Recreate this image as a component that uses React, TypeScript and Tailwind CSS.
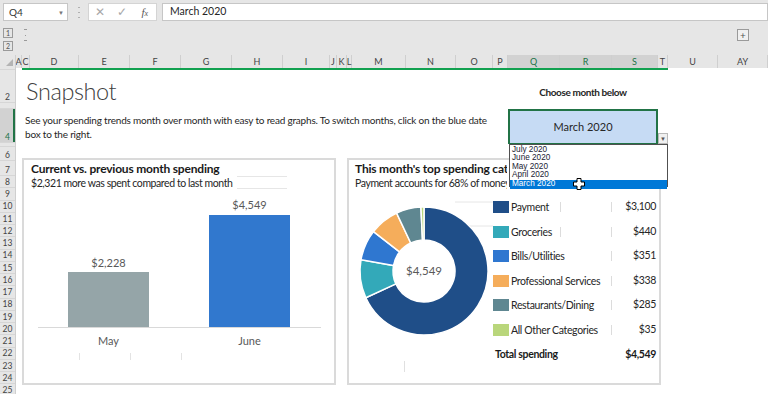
import React from "react";

const COLS: [string, string, boolean][] = [
  ["A", "w-[6px]", false],
  ["C", "w-[8px]", false],
  ["D", "w-[49px]", false],
  ["E", "w-[51px]", false],
  ["F", "w-[51px]", false],
  ["G", "w-[51px]", false],
  ["H", "w-[51px]", false],
  ["I", "w-[47px]", false],
  ["J", "w-[7px]", false],
  ["K", "w-[10px]", false],
  ["L", "w-[5px]", false],
  ["M", "w-[54px]", false],
  ["N", "w-[50px]", false],
  ["O", "w-[37px]", false],
  ["P", "w-[15px]", false],
  ["Q", "w-[52px]", true],
  ["R", "w-[52px]", true],
  ["S", "w-[46px]", true],
  ["T", "w-[10px]", false],
  ["U", "w-[50px]", false],
  ["AY", "w-[50px]", false],
];

const ROWS: [string, string, boolean][] = [
  ["", "h-[2px]", false],
  ["2", "h-[33px]", false],
  ["", "h-[6px]", false],
  ["4", "h-[34px]", true],
  ["", "h-[4px]", false],
  ["6", "h-[14px]", false],
  ["7", "h-[15px]", false],
  ...Array.from({ length: 18 }, (_, i) => [String(i + 8), "h-[12.25px]", false] as [string, string, boolean]),
];

const SEGS = [
  { name: "Payment", v: 3100, c: "#1f4e88", tick: true },
  { name: "Groceries", v: 440, c: "#33a9b9", tick: true },
  { name: "Bills/Utilities", v: 351, c: "#2f77d0", tick: false },
  { name: "Professional Services", v: 338, c: "#f5ad5b", tick: false },
  { name: "Restaurants/Dining", v: 285, c: "#5f8791", tick: false },
  { name: "All Other Categories", v: 35, c: "#b9d67b", tick: false },
];

function arcPath(cx: number, cy: number, r0: number, r1: number, a0: number, a1: number) {
  const p = (r: number, a: number) => [cx + r * Math.sin(a), cy - r * Math.cos(a)];
  const large = a1 - a0 > Math.PI ? 1 : 0;
  const [x0, y0] = p(r1, a0);
  const [x1, y1] = p(r1, a1);
  const [x2, y2] = p(r0, a1);
  const [x3, y3] = p(r0, a0);
  return `M${x0} ${y0} A${r1} ${r1} 0 ${large} 1 ${x1} ${y1} L${x2} ${y2} A${r0} ${r0} 0 ${large} 0 ${x3} ${y3} Z`;
}

function Donut() {
  const total = SEGS.reduce((s, x) => s + x.v, 0);
  let a = 0;
  const cx = 75;
  const cy = 81;
  return (
    <svg width="144" height="192" className="shrink-0">
      <line x1="106" y1="12" x2="144" y2="12" stroke="#e6e6e6" strokeWidth="1" />
      <line x1="106" y1="36" x2="144" y2="36" stroke="#e6e6e6" strokeWidth="1" />
      <line x1="55.5" y1="171" x2="55.5" y2="182" stroke="#e0e0e0" strokeWidth="1" />
      {SEGS.map((s) => {
        const a0 = a;
        const a1 = a + (s.v / total) * Math.PI * 2;
        a = a1;
        return <path key={s.name} d={arcPath(cx, cy, 31, 64, a0, a1)} fill={s.c} stroke="#ffffff" strokeWidth="1.5" />;
      })}
      <text x={cx} y={cy + 4} textAnchor="middle" fontSize="11.5" fill="#595959" fontFamily="Lato, sans-serif">
        $4,549
      </text>
    </svg>
  );
}

function BarChart() {
  return (
    <svg width="310" height="190" className="block">
      <line x1="14" y1="137.5" x2="297" y2="137.5" stroke="#d9d9d9" strokeWidth="1" />
      <rect x="44" y="82" width="81" height="55" fill="#95a5a8" />
      <rect x="185" y="25" width="81" height="112" fill="#3178ce" />
      <g fontFamily="Lato, sans-serif" fontSize="11" fill="#595959" textAnchor="middle">
        <text x="84.5" y="77">$2,228</text>
        <text x="225.5" y="19">$4,549</text>
        <text x="84.5" y="155">May</text>
        <text x="225.5" y="155">June</text>
      </g>
      <g stroke="#e3e3e3" strokeWidth="1">
        <line x1="55.5" y1="163" x2="55.5" y2="170" />
        <line x1="106.5" y1="163" x2="106.5" y2="170" />
        <line x1="157.5" y1="163" x2="157.5" y2="170" />
      </g>
    </svg>
  );
}

function Cursor() {
  return (
    <svg width="12" height="12" viewBox="0 0 12 12" className="absolute left-[63px] top-[33px]">
      <path d="M4 0.5H8V4H11.5V8H8V11.5H4V8H0.5V4H4Z" fill="#ffffff" stroke="#000000" strokeWidth="1" />
    </svg>
  );
}

export default function App() {
  return (
    <div className="relative h-[394px] w-[768px] overflow-hidden bg-white font-['Lato',sans-serif] text-[#262626]">
      {/* Formula bar */}
      <div className="flex h-[24px] items-center bg-[#e6e6e6]">
        <div className="ml-[3px] flex h-[18px] w-[65px] items-center justify-between border border-[#c6c6c6] bg-white pl-[5px] pr-[3px] text-[10px] text-[#333]">
          <span>Q4</span>
          <span className="text-[6px] text-[#777]">▼</span>
        </div>
        <div className="ml-[10px] flex h-[11px] w-[2px] flex-col justify-between">
          <span className="block h-[1px] w-[2px] bg-[#b0b0b0]" />
          <span className="block h-[1px] w-[2px] bg-[#b0b0b0]" />
          <span className="block h-[1px] w-[2px] bg-[#b0b0b0]" />
        </div>
        <div className="ml-[8px] flex h-[18px] w-[69px] items-center border border-[#d4d4d4] bg-white text-[#a8a8a8]">
          <span className="w-[23px] text-center text-[12px] leading-none">✕</span>
          <span className="w-[23px] text-center text-[12px] leading-none">✓</span>
          <span className="w-[23px] text-center font-['Liberation_Serif',serif] text-[11px] italic leading-none text-[#555]">
            f<span className="text-[8px]">x</span>
          </span>
        </div>
        <div className="ml-[5px] flex h-[18px] flex-1 items-center border border-[#c6c6c6] bg-white pl-[7px] text-[10.5px] text-[#262626]">
          March 2020
        </div>
      </div>

      {/* Outline area */}
      <div className="flex h-[31px] bg-[#e6e6e6]">
        <div className="ml-[3px] mt-[4px] flex flex-col gap-[3px]">
          <div className="flex h-[10px] w-[10px] items-center justify-center border border-[#9a9a9a] text-[7px] leading-none text-[#555]">1</div>
          <div className="flex h-[10px] w-[10px] items-center justify-center border border-[#9a9a9a] text-[7px] leading-none text-[#555]">2</div>
        </div>
        <div className="ml-[11px] mt-[5px] flex h-[12px] flex-col items-center justify-between">
          <span className="block h-[1px] w-[3px] bg-[#9a9a9a]" />
          <span className="block h-[1px] w-[1px] bg-[#9a9a9a]" />
          <span className="block h-[1px] w-[3px] bg-[#9a9a9a]" />
        </div>
        <div className="ml-auto mr-[19px] mt-[5px] flex h-[12px] w-[12px] items-center justify-center border border-[#9a9a9a] bg-[#f0f0f0] text-[10px] leading-none text-[#555]">
          +
        </div>
      </div>

      {/* Column headers */}
      <div className="flex h-[13px] bg-[#e6e6e6] text-[9px] text-[#444]">
        <div className="relative w-[16px] border-r border-[#cfcfcf]">
          <svg width="7" height="7" className="absolute right-[2px] bottom-[2px]">
            <path d="M7 0V7H0Z" fill="#b4b4b4" />
          </svg>
        </div>
        {COLS.map(([l, w, sel]) => (
          <div
            key={l}
            className={`${w} flex shrink-0 items-center justify-center overflow-visible whitespace-nowrap border-r border-[#cfcfcf] leading-none ${
              sel ? "bg-[#d2d2d2] text-[#217346]" : ""
            }`}
          >
            {l}
          </div>
        ))}
      </div>

      {/* Sheet */}
      <div className="flex">
        <div className="flex w-[16px] shrink-0 flex-col border-r border-[#cfcfcf] bg-[#e6e6e6] text-[8.5px] text-[#444]">
          {ROWS.map(([l, h, sel], i) => (
            <div
              key={i}
              className={`${h} flex shrink-0 items-end justify-center overflow-hidden border-b border-[#d6d6d6] leading-none ${
                sel ? "bg-[#d2d2d2] text-[#217346] shadow-[inset_-2px_0_0_#217346]" : ""
              }`}
            >
              <span className="pb-[1px]">{l}</span>
            </div>
          ))}
        </div>

        <div className="flex flex-1 flex-col">
          <div className="ml-[6px] h-[2px] w-[646px] bg-[#12a150]" />

          {/* Top section */}
          <div className="flex h-[88px]">
            <div className="w-[492px] pl-[9px]">
              <div className="mt-[9px] h-[25px] pl-[1px] text-[23.5px] font-light leading-[25px] tracking-[-0.4px] text-[#404040]">Snapshot</div>
              <div className="mt-[9px] text-[10px] leading-[14px] tracking-[-0.2px]">
                <div className="whitespace-nowrap">
                  See your spending trends month over month with easy to read graphs. To switch months, click on the blue date
                </div>
                <div className="whitespace-nowrap">box to the right.</div>
              </div>
            </div>
            <div className="w-[160px]">
              <div className="mt-[15px] w-[150px] text-center text-[10px] font-bold leading-[14px] tracking-[-0.4px]">Choose month below</div>
              <div className="relative mt-[10px] flex items-end">
                <div className="flex h-[35px] w-[150px] items-center justify-center border-2 border-b border-[#217346] bg-[#c6dbf4] text-[11px] text-[#262626]">
                  March 2020
                </div>
                <div className="flex h-[11px] w-[10px] items-center justify-center border border-[#b8b8b8] bg-[#f0f0f0] text-[6px] text-[#555]">
                  ▼
                </div>
                <div className="absolute left-[1px] top-[35px] z-10 h-[43px] w-[159px] border border-[#505050] bg-white pl-[2px] pt-[1px] font-['Liberation_Sans',sans-serif] text-[8.2px] leading-[8.3px] text-[#1a1a33]">
                  <div>July 2020</div>
                  <div>June 2020</div>
                  <div>May 2020</div>
                  <div>April 2020</div>
                  <div className="relative -ml-[2px] mt-[0.5px] h-[9px] bg-[#0078d7] pl-[2px] text-white">
                    March 2020
                  </div>
                  <Cursor />
                </div>
              </div>
            </div>
          </div>

          {/* Cards */}
          <div className="flex gap-[11px] pl-[6px]">
            <div className="h-[227px] w-[314px] border-2 border-[#dadada]">
              <div className="pl-[7px] pt-[1px] text-[12px] font-bold leading-[15px] tracking-[-0.2px] text-[#1a1a1a]">
                Current vs. previous month spending
              </div>
              <div className="flex h-[14px] pl-[7px]">
                <span className="whitespace-nowrap text-[10.5px] leading-[14px] tracking-[-0.42px]">$2,321 more was spent compared to last month</span>
                <span className="ml-[4px] h-[13px] w-[50px] border-y border-[#e6e6e6]" />
              </div>
              <BarChart />
            </div>

            <div className="relative h-[227px] w-[314px] border-2 border-[#dadada]">
              <div className="w-[158px] overflow-hidden whitespace-nowrap pl-[6px] pt-[1px] text-[12px] font-bold leading-[15px] tracking-[-0.2px] text-[#1a1a1a]">
                This month's top spending categories
              </div>
              <div className="h-[14px] w-[158px] overflow-hidden whitespace-nowrap pl-[6px] text-[10.5px] leading-[14px] tracking-[-0.42px]">
                Payment accounts for 68% of money spent
              </div>
              <div className="flex">
                <Donut />
                <div className="mt-[5px] flex w-[164px] flex-col text-[10.5px] tracking-[-0.35px]">
                  {SEGS.map((s) => (
                    <div key={s.name} className="flex h-[24.5px] items-center">
                      <span className="h-[12px] w-[16px] shrink-0" style={{ background: s.c }} />
                      <div
                        className={`flex h-[10px] w-[52px] shrink-0 items-center overflow-visible whitespace-nowrap pl-[2px] leading-none ${
                          s.tick ? "border-r border-[#dcdcdc]" : ""
                        }`}
                      >
                        {s.name}
                      </div>
                      <div className="h-[10px] w-[51px] shrink-0 border-r border-[#dcdcdc]" />
                      <div className="w-[44px] text-right">${s.v.toLocaleString("en-US")}</div>
                    </div>
                  ))}
                  <div className="mt-[1px] flex h-[24.5px] items-center font-bold text-[#1a1a1a]">
                    <span className="pl-[2px]">Total spending</span>
                    <span className="ml-auto w-[60px] pr-[1px] text-right">$4,549</span>
                  </div>
                </div>
              </div>
            </div>
          </div>
        </div>
      </div>
    </div>
  );
}
